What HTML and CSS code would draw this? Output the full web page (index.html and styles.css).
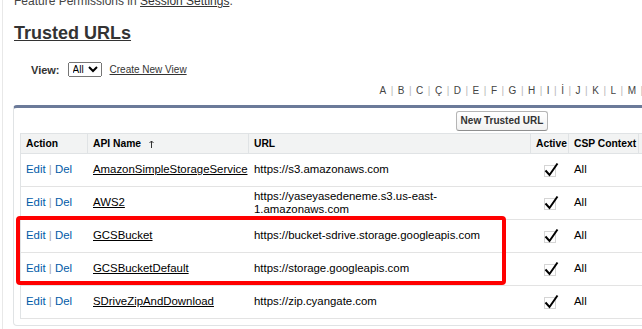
FILE: index.html
```html
<!doctype html>
<html lang="en">
  <head>
    <meta charset="UTF-8" />
    <meta name="viewport" content="width=device-width, initial-scale=1.0" />
    <title>Trusted URLs | Setup</title>
    <link rel="stylesheet" href="styles.css">
  </head>
  <body>
    <div class="page">
      <p class="intro">Feature Permissions in <a href="#">Session Settings</a>.</p>

      <h1 class="title">Trusted URLs</h1>

      <div class="view-bar">
        <label for="viewSelect">View:</label>
        <select id="viewSelect">
          <option>All</option>
        </select>
        <a href="#" class="view-link">Create New View</a>
      </div>

      <div class="rolodex">
        <a href="#">A</a><span class="sep">|</span><a href="#">B</a><span class="sep">|</span><a href="#">C</a><span class="sep">|</span><a href="#">Ç</a><span class="sep">|</span><a href="#">D</a><span class="sep">|</span><a href="#">E</a><span class="sep">|</span><a href="#">F</a><span class="sep">|</span><a href="#">G</a><span class="sep">|</span><a href="#">H</a><span class="sep">|</span><a href="#">I</a><span class="sep">|</span><a href="#">İ</a><span class="sep">|</span><a href="#">J</a><span class="sep">|</span><a href="#">K</a><span class="sep">|</span><a href="#">L</a><span class="sep">|</span><a href="#">M</a><span class="sep">|</span><a href="#">N</a><span class="sep">|</span><a href="#">O</a><span class="sep">|</span><a href="#">Ö</a><span class="sep">|</span><a href="#">P</a><span class="sep">|</span><a href="#">R</a><span class="sep">|</span><a href="#">S</a><span class="sep">|</span><a href="#">Ş</a><span class="sep">|</span><a href="#">T</a><span class="sep">|</span><a href="#">U</a><span class="sep">|</span><a href="#">Ü</a><span class="sep">|</span><a href="#">V</a><span class="sep">|</span><a href="#">Y</a><span class="sep">|</span><a href="#">Z</a><span class="sep">|</span><a href="#">Other</a><span class="sep">|</span><a href="#" class="current">All</a>
      </div>

      <div class="list-block">
        <div class="list-buttons">
          <button type="button" class="btn">New Trusted URL</button>
        </div>

        <table class="list">
          <colgroup>
            <col class="col-action" />
            <col class="col-name" />
            <col class="col-url" />
            <col class="col-active" />
            <col class="col-context" />
            <col />
          </colgroup>
          <thead>
            <tr>
              <th>Action</th>
              <th>API Name
                <svg class="sort-arrow" width="5" height="8" viewBox="0 0 5 8"><path d="M2.5 8V1M0.5 3L2.5 1L4.5 3" fill="none" stroke="#333" stroke-width="1"/></svg>
              </th>
              <th>URL</th>
              <th>Active</th>
              <th>CSP Context</th>
              <th>Description</th>
            </tr>
          </thead>
          <tbody>
            <tr>
              <td><a href="#" class="action-link">Edit</a> <span class="bar">|</span> <a href="#" class="action-link">Del</a></td>
              <td><a href="#" class="name-link">AmazonSimpleStorageService</a></td>
              <td>https://s3.amazonaws.com</td>
              <td class="check-cell">
                <svg class="check" width="15" height="16" viewBox="0 0 15 16"><rect x="0.5" y="3.5" width="11" height="11" fill="none" stroke="#aaa" stroke-dasharray="1 1"/><path d="M1.5 8.5L5.5 13L13.5 1.5" fill="none" stroke="#000" stroke-width="2"/></svg>
              </td>
              <td>All</td>
              <td></td>
            </tr>
            <tr>
              <td><a href="#" class="action-link">Edit</a> <span class="bar">|</span> <a href="#" class="action-link">Del</a></td>
              <td><a href="#" class="name-link">AWS2</a></td>
              <td>https://yaseyasedeneme.s3.us-east-1.amazonaws.com</td>
              <td class="check-cell">
                <svg class="check" width="15" height="16" viewBox="0 0 15 16"><rect x="0.5" y="3.5" width="11" height="11" fill="none" stroke="#aaa" stroke-dasharray="1 1"/><path d="M1.5 8.5L5.5 13L13.5 1.5" fill="none" stroke="#000" stroke-width="2"/></svg>
              </td>
              <td>All</td>
              <td></td>
            </tr>
            <tr>
              <td><a href="#" class="action-link">Edit</a> <span class="bar">|</span> <a href="#" class="action-link">Del</a></td>
              <td><a href="#" class="name-link">GCSBucket</a></td>
              <td>https://bucket-sdrive.storage.googleapis.com</td>
              <td class="check-cell">
                <svg class="check" width="15" height="16" viewBox="0 0 15 16"><rect x="0.5" y="3.5" width="11" height="11" fill="none" stroke="#aaa" stroke-dasharray="1 1"/><path d="M1.5 8.5L5.5 13L13.5 1.5" fill="none" stroke="#000" stroke-width="2"/></svg>
              </td>
              <td>All</td>
              <td></td>
            </tr>
            <tr>
              <td><a href="#" class="action-link">Edit</a> <span class="bar">|</span> <a href="#" class="action-link">Del</a></td>
              <td><a href="#" class="name-link">GCSBucketDefault</a></td>
              <td>https://storage.googleapis.com</td>
              <td class="check-cell">
                <svg class="check" width="15" height="16" viewBox="0 0 15 16"><rect x="0.5" y="3.5" width="11" height="11" fill="none" stroke="#aaa" stroke-dasharray="1 1"/><path d="M1.5 8.5L5.5 13L13.5 1.5" fill="none" stroke="#000" stroke-width="2"/></svg>
              </td>
              <td>All</td>
              <td></td>
            </tr>
            <tr>
              <td><a href="#" class="action-link">Edit</a> <span class="bar">|</span> <a href="#" class="action-link">Del</a></td>
              <td><a href="#" class="name-link">SDriveZipAndDownload</a></td>
              <td>https://zip.cyangate.com</td>
              <td class="check-cell">
                <svg class="check" width="15" height="16" viewBox="0 0 15 16"><rect x="0.5" y="3.5" width="11" height="11" fill="none" stroke="#aaa" stroke-dasharray="1 1"/><path d="M1.5 8.5L5.5 13L13.5 1.5" fill="none" stroke="#000" stroke-width="2"/></svg>
              </td>
              <td>All</td>
              <td></td>
            </tr>
          </tbody>
        </table>

        <!-- annotation box drawn over the two GCS rows -->
        <div class="highlight"></div>
      </div>
    </div>
  </body>
</html>
```

FILE: styles.css
```css
* {
  box-sizing: border-box;
}

html,
body {
  margin: 0;
  padding: 0;
  overflow: hidden;
  background-color: #ffffff;
}

body {
  font-family: "Liberation Sans", Arial, sans-serif;
  color: #333;
}

.page {
  display: flow-root;
  margin-left: 2px;
  border-left: 1px solid #e8e8e8;
  padding-left: 10px;
  width: 1010px;
  min-height: 100vh;
}

.intro {
  margin: -6px 0 0;
  padding-left: 1px;
  font-size: 12px;
  line-height: 14px;
  color: #444;
}

.intro a {
  color: #333;
}

.title {
  margin: 15px 0 0;
  padding-left: 1px;
  font-size: 18px;
  line-height: 21px;
  font-weight: bold;
  color: #333;
  text-decoration: underline;
}

/* View selector */
.view-bar {
  display: flex;
  align-items: center;
  height: 15px;
  margin-top: 18px;
  padding-left: 18px;
}

.view-bar label {
  font-size: 11px;
  font-weight: bold;
  color: #333;
  margin-right: 8px;
}

.view-bar select {
  width: 34px;
  height: 15px;
  padding: 0;
  font-family: "Liberation Sans", Arial, sans-serif;
  font-size: 10px;
  margin-right: 8px;
}

.view-link {
  font-size: 10px;
  color: #333;
}

/* Letter filter */
.rolodex {
  margin-top: 8px;
  padding-left: 362px;
  font-size: 10px;
  line-height: 12px;
  white-space: nowrap;
}

.rolodex a {
  color: #444;
  text-decoration: none;
  padding: 0 4.5px;
}

.rolodex .sep {
  color: #b8b8b8;
}

/* List block */
.list-block {
  position: relative;
  width: 978px;
  margin-top: 8px;
  padding: 0 6px 6px;
  background-color: #ffffff;
  border: 1px solid #e0e3e5;
  border-top: 3px solid #6b7a99;
  border-radius: 4px;
}

.list-buttons {
  padding: 2px 0;
  text-align: center;
}

.btn {
  height: 20px;
  padding: 0 4px;
  font-family: "Liberation Sans", Arial, sans-serif;
  font-size: 10px;
  font-weight: bold;
  color: #333;
  background: linear-gradient(#ffffff, #f1f1f1);
  border: 1px solid #b5b5b5;
  border-bottom-color: #8f8f8f;
  border-radius: 3px;
  cursor: pointer;
}

.list {
  width: 100%;
  table-layout: fixed;
  border-collapse: separate;
  border-spacing: 0;
  border: 1px solid #e0e3e5;
  border-bottom: none;
}

.col-action {
  width: 67px;
}

.col-name {
  width: 161px;
}

.col-url {
  width: 282px;
}

.col-active {
  width: 38px;
}

.col-context {
  width: 70px;
}

.list th {
  height: 20px;
  padding: 0 2px 0 5px;
  text-align: left;
  font-size: 10.3px;
  font-weight: bold;
  color: #000;
  white-space: nowrap;
  overflow: hidden;
  background-color: #f2f3f3;
  border-right: 1px solid #e0e3e5;
  border-bottom: 1px solid #e0e3e5;
}

.sort-arrow {
  margin-left: 5px;
  vertical-align: -1px;
}

.list td {
  height: 33px;
  padding: 0 2px 0 5px;
  font-size: 11.4px;
  line-height: 13px;
  color: #000;
  vertical-align: middle;
  border-bottom: 1px solid #e3e3e3;
}

.action-link {
  color: #015ba7;
  text-decoration: none;
}

.bar {
  color: #a8a8a8;
}

.name-link {
  color: #000;
  text-decoration: underline;
}

.check-cell {
  text-align: center;
}

.check {
  display: inline-block;
  vertical-align: middle;
}

.highlight {
  position: absolute;
  left: 2px;
  top: 108px;
  width: 490px;
  height: 69px;
  border: 4px solid #ff0000;
  border-radius: 4px;
  pointer-events: none;
}
```
